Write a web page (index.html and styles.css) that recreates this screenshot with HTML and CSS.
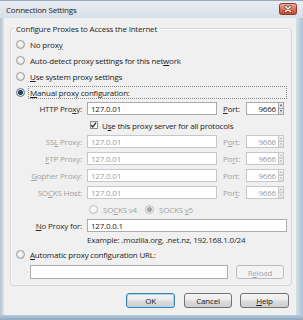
FILE: index.html
```html
<!DOCTYPE html>
<html>
<head>
<meta charset="utf-8">
<title>Connection Settings</title>
<link rel="stylesheet" href="styles.css">
</head>
<body>
<div class="win">
  <div class="titlebar">
    <span class="title">Connection Settings</span>
    <svg class="close" width="18" height="12" viewBox="0 0 18 12">
      <defs>
        <linearGradient id="cg" x1="0" y1="0" x2="0" y2="1">
          <stop offset="0" stop-color="#eab3a5"/>
          <stop offset="0.5" stop-color="#d9735c"/>
          <stop offset="1" stop-color="#c2452c"/>
        </linearGradient>
      </defs>
      <rect x="0.5" y="0.5" width="17" height="11" rx="2" fill="url(#cg)" stroke="#8f3a29"/>
      <path d="M6.5 3.5 L11.5 8.5 M11.5 3.5 L6.5 8.5" stroke="#6b2a1e" stroke-width="2.6" stroke-linecap="round"/>
      <path d="M6.5 3.5 L11.5 8.5 M11.5 3.5 L6.5 8.5" stroke="#ffffff" stroke-width="1.5" stroke-linecap="round"/>
    </svg>
  </div>
  <div class="mid">
    <div class="lframe"></div>
    <div class="body">
      <fieldset class="group">
        <legend>Configure Proxies to Access the Internet</legend>
        <div class="opt"><span class="radio"></span><span>No prox<u>y</u></span></div>
        <div class="opt"><span class="radio"></span><span>Auto-detect proxy settings for this net<u>w</u>ork</span></div>
        <div class="opt"><span class="radio"></span><span><u>U</u>se system proxy settings</span></div>
        <div class="opt"><span class="radio on"></span><span class="focus"><u>M</u>anual proxy configuration:</span></div>

        <div class="prow first">
          <span class="plabel">HTTP Pro<u>x</u>y:</span>
          <span class="field">127.0.01</span>
          <span class="portlabel"><u>P</u>ort:</span>
          <span class="port"><span class="num">9666</span><span class="spin"><i class="up"></i><i class="dn"></i></span></span>
        </div>
        <div class="crow"><span class="check"><svg width="8" height="8" viewBox="0 0 8 8"><path d="M1.3 4.2 L3.2 6.3 L6.8 1.2" fill="none" stroke="#1d2a3a" stroke-width="1.4"/></svg></span><span>U<u>s</u>e this proxy server for all protocols</span></div>

        <div class="prow dis">
          <span class="plabel">SS<u>L</u> Proxy:</span>
          <span class="field">127.0.01</span>
          <span class="portlabel">P<u>o</u>rt:</span>
          <span class="port"><span class="num">9666</span><span class="spin"><i class="up"></i><i class="dn"></i></span></span>
        </div>
        <div class="prow dis">
          <span class="plabel"><u>F</u>TP Proxy:</span>
          <span class="field">127.0.01</span>
          <span class="portlabel">Po<u>r</u>t:</span>
          <span class="port"><span class="num">9666</span><span class="spin"><i class="up"></i><i class="dn"></i></span></span>
        </div>
        <div class="prow dis">
          <span class="plabel"><u>G</u>opher Proxy:</span>
          <span class="field">127.0.01</span>
          <span class="portlabel">Port:</span>
          <span class="port"><span class="num">9666</span><span class="spin"><i class="up"></i><i class="dn"></i></span></span>
        </div>
        <div class="prow dis">
          <span class="plabel">SO<u>C</u>KS Host:</span>
          <span class="field">127.0.01</span>
          <span class="portlabel">Por<u>t</u>:</span>
          <span class="port"><span class="num">9666</span><span class="spin"><i class="up"></i><i class="dn"></i></span></span>
        </div>

        <div class="srow dis">
          <span class="radio"></span><span class="sv4">SO<u>C</u>KS v4</span>
          <span class="radio on"></span><span>SOCKS <u>v</u>5</span>
        </div>

        <div class="prow np">
          <span class="plabel"><u>N</u>o Proxy for:</span>
          <span class="field wide">127.0.0.1</span>
        </div>
        <div class="example">Example: .mozilla.org, .net.nz, 192.168.1.0/24</div>

        <div class="opt auto"><span class="radio"></span><span><u>A</u>utomatic proxy configuration URL:</span></div>
        <div class="urow">
          <span class="field url"></span>
          <span class="btn reload">R<u>e</u>load</span>
        </div>
      </fieldset>
      <div class="buttons">
        <span class="btn def">OK</span>
        <span class="btn cancel">Cancel</span>
        <span class="btn help"><u>H</u>elp</span>
      </div>
    </div>
    <div class="rframe"></div>
  </div>
  <div class="bframe"></div>
</div>
</body>
</html>
```

FILE: styles.css
```css
* { box-sizing: border-box; }
html, body { margin: 0; padding: 0; }
body {
  width: 303px;
  height: 320px;
  overflow: hidden;
  background: #c7d2dd;
  font-family: "Open Sans", "Noto Sans", sans-serif;
  font-size: 8px;
  letter-spacing: -0.2px;
  color: #1c1c1c;
}
u { text-decoration: underline; text-underline-offset: 1px; }

.win { width: 303px; height: 320px; display: flex; flex-direction: column; }

.titlebar {
  height: 18px;
  flex: none;
  display: flex;
  align-items: center;
  justify-content: space-between;
  padding: 0 6px 0 6px;
  background: linear-gradient(#e8edf2, #d7dfe7);
  border-top: 1px solid #9aaabb;
}
.title { color: #1a1a1a; line-height: 12px; }
.close { display: block; margin-top: -2px; }

.mid { flex: 1; display: flex; min-height: 0; }
.lframe { width: 4px; background: linear-gradient(90deg, #b7c2cd, #dde4eb); }
.body {
  width: 292px;
  background: #f0f0f0;
  padding: 4px 6px 0 6px;
  display: flex;
  flex-direction: column;
}
.rframe { flex: 1; background: linear-gradient(90deg, #d5e1ec, #a9c1d7); }
.bframe { height: 5px; flex: none; background: linear-gradient(#b7cadb, #8ea9c2); }

.group {
  margin: 0;
  width: 280px;
  padding: 1px 4px 4px 5px;
  border: 1px solid #d5d8db;
  border-radius: 3px;
  box-shadow: inset 1px 1px 0 #fafafa;
}
.group legend {
  padding: 0 2px;
  margin-left: -2px;
  line-height: 13px;
  height: 13px;
  color: #1c1c1c;
}

.opt { height: 16px; display: flex; align-items: center; }
.opt.auto { height: 15px; }

.radio {
  flex: none;
  width: 9px;
  height: 9px;
  border-radius: 50%;
  border: 1px solid #9a9a9a;
  background: radial-gradient(circle at 45% 40%, #ffffff 0, #ececec 45%, #cfcfcf 100%);
  margin-right: 5px;
}
.radio.on {
  border-color: #5d7185;
  background: radial-gradient(circle at 50% 50%, #3f6c92 0, #122438 2px, #dde6ee 2.8px, #f6f6f6 4.5px);
}
.focus {
  flex: 1;
  height: 13px;
  display: flex;
  align-items: center;
  border: 1px dotted #8a8a8a;
  padding-left: 1px;
  margin-left: -2px;
}

.prow { height: 17px; display: flex; align-items: center; }
.plabel { width: 66px; text-align: right; margin-right: 5px; color: #2a2a2a; flex: none; }
.field {
  flex: none;
  width: 130px;
  height: 13px;
  border: 1px solid #a9acb0;
  background: #fff;
  padding-left: 3px;
  line-height: 11px;
  color: #1c1c1c;
}
.portlabel { width: 23px; margin-left: 6px; flex: none; color: #2a2a2a; }
.port { display: flex; flex: none; height: 13px; }
.num {
  width: 33px;
  border: 1px solid #a9acb0;
  background: #fff;
  text-align: right;
  padding-right: 2px;
  line-height: 11px;
}
.spin {
  width: 6px;
  display: flex;
  flex-direction: column;
  margin-left: -1px;
}
.spin i {
  flex: 1;
  border: 1px solid #a0a4a8;
  background: linear-gradient(#f7f7f7, #dcdcdc);
  position: relative;
}
.spin i + i { margin-top: -1px; }
.spin i::after {
  content: "";
  position: absolute;
  left: 1px;
  border-left: 1px solid transparent;
  border-right: 1px solid transparent;
}
.spin .up::after { top: 1px; border-bottom: 2px solid #3a3a3a; }
.spin .dn::after { top: 1px; border-top: 2px solid #3a3a3a; }

.crow { height: 16px; display: flex; align-items: center; }
.check {
  flex: none;
  width: 8px;
  height: 8px;
  margin-left: 74px;
  margin-right: 4px;
  border: 1px solid #8e8f8f;
  background: linear-gradient(135deg, #e4e4e4, #ffffff);
  display: flex;
}
.check svg { display: block; margin: -1px 0 0 -1px; }

.dis, .dis .plabel, .dis .portlabel { color: #a2a2a2; }
.dis .field, .dis .num { border-color: #c5c7c9; color: #9c9c9c; }
.dis .spin i { border-color: #c5c7c9; }
.dis .spin .up::after { border-bottom-color: #b5b5b5; }
.dis .spin .dn::after { border-top-color: #b5b5b5; }
.dis .radio { border-color: #c0c0c0; background: radial-gradient(circle at 45% 40%, #ffffff 0, #f0f0f0 60%, #e2e2e2 100%); }
.dis .radio.on { background: radial-gradient(circle at 50% 50%, #a8a8a8 0, #a0a0a0 2px, #ececec 2.8px, #f6f6f6 4.5px); }

.srow { height: 17px; display: flex; align-items: center; padding-left: 73px; }
.srow .radio { margin-right: 5px; }
.sv4 { width: 42px; }

.prow.np { height: 15px; }
.field.wide { width: 200px; }
.example { height: 14px; line-height: 14px; padding-left: 71px; color: #2a2a2a; }

.urow { height: 19px; display: flex; align-items: center; padding-left: 14px; padding-top: 1px; }
.field.url { width: 198px; height: 14px; }

.btn {
  flex: none;
  height: 15px;
  border: 1px solid #707070;
  border-radius: 3px;
  background: linear-gradient(#f4f4f4 0, #ebebeb 48%, #dddddd 52%, #cfcfcf 100%);
  display: flex;
  align-items: center;
  justify-content: center;
  color: #1c1c1c;
}
.btn.reload {
  width: 48px;
  height: 14px;
  margin-left: 8px;
  border-color: #b9bcbf;
  background: #f4f4f4;
  color: #a6a6a6;
}
.buttons {
  display: flex;
  justify-content: flex-end;
  margin-top: 7px;
  margin-right: 1px;
}
.btn.def {
  width: 49px;
  border-color: #3c7fb1;
  box-shadow: inset 0 0 0 1px #a6d8f2;
}
.btn.cancel { width: 48px; margin-left: 9px; }
.btn.help { width: 49px; margin-left: 8px; }
```
